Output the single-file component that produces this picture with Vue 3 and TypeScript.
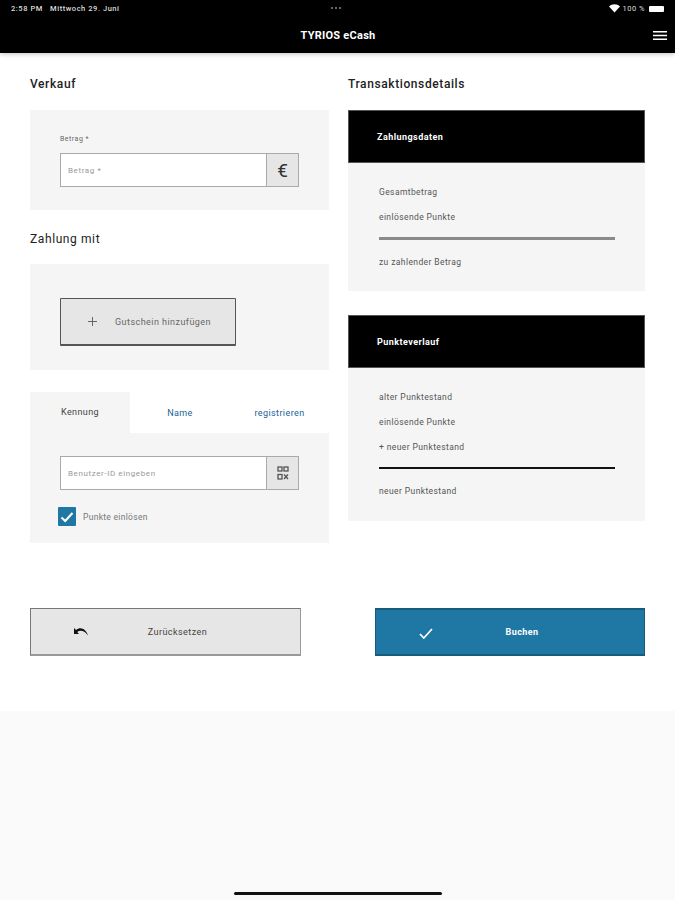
<script setup lang="ts">
interface Panel { title: string; rows: { text: string; rule?: 'grey' | 'black' }[] }
const panels: Panel[] = [
  { title: 'Zahlungsdaten', rows: [{ text: 'Gesamtbetrag' }, { text: 'einlösende Punkte', rule: 'grey' }, { text: 'zu zahlender Betrag' }] },
  { title: 'Punkteverlauf', rows: [{ text: 'alter Punktestand' }, { text: 'einlösende Punkte' }, { text: '+ neuer Punktestand', rule: 'black' }, { text: 'neuer Punktestand' }] }
]
</script>

<template>
  <div class="page">
    <header class="head">
      <div class="status">
        <span class="status-left">2:58 PM&nbsp;&nbsp;&nbsp;Mittwoch 29. Juni</span>
        <span class="dots"><i></i><i></i><i></i></span>
        <span class="status-right">
          <svg width="11" height="9" viewBox="0 0 11 9"><path d="M5.5 8.6 0 2.6C3-.4 8-.4 11 2.6Z" fill="#fff"/></svg>
          <span>100 %</span>
          <span class="battery"></span>
        </span>
      </div>
      <div class="appbar">
        <span class="brand">TYRIOS eCash</span>
        <svg class="burger" width="14" height="9" viewBox="0 0 14 9"><path d="M0 .75h14M0 4.5h14M0 8.25h14" stroke="#fff" stroke-width="1.4"/></svg>
      </div>
    </header>

    <main class="main">
      <div class="columns">
        <section class="col-left">
          <h2 class="title">Verkauf</h2>
          <div class="card sale">
            <label class="small-label">Betrag *</label>
            <div class="field">
              <span class="placeholder">Betrag *</span>
              <span class="addon euro">€</span>
            </div>
          </div>

          <h2 class="title pay-title">Zahlung mit</h2>
          <div class="card voucher">
            <button class="btn add">
              <svg width="9" height="9" viewBox="0 0 9 9"><path d="M4.5 0v9M0 4.500h9" stroke="#666" stroke-width="1"/></svg>
              <span>Gutschein hinzufügen</span>
            </button>
          </div>

          <div class="tabs">
            <span class="tab active">Kennung</span>
            <span class="tab name">Name</span>
            <span class="tab reg">registrieren</span>
          </div>
          <div class="card tabbody">
            <div class="field">
              <span class="placeholder">Benutzer-ID eingeben</span>
              <span class="addon">
                <svg width="12" height="14" viewBox="0 0 12 14" fill="none" stroke="#555" stroke-width="1.3">
                  <rect x="1" y="1" width="4" height="4"/><rect x="7" y="1" width="4" height="4"/><rect x="1" y="8.500" width="4" height="4.500"/>
                  <path d="M7 8.500l4 4.500M11 8.500l-4 4.500"/>
                </svg>
              </span>
            </div>
            <div class="check-row">
              <span class="check">
                <svg width="14" height="12" viewBox="0 0 14 12"><path d="M1.5 6.5 5.2 10 12.5 2" fill="none" stroke="#fff" stroke-width="2"/></svg>
              </span>
              <span class="check-label">Punkte einlösen</span>
            </div>
          </div>
        </section>

        <section class="col-right">
          <h2 class="title">Transaktionsdetails</h2>
          <article v-for="p in panels" :key="p.title" class="panel">
            <div class="panel-head">{{ p.title }}</div>
            <div class="panel-body">
              <template v-for="r in p.rows" :key="r.text">
                <div class="row">{{ r.text }}</div>
                <div v-if="r.rule" class="rule" :class="r.rule"></div>
              </template>
            </div>
          </article>
        </section>
      </div>

      <div class="actions">
        <button class="btn action reset">
          <svg class="act-icon" width="15" height="9" viewBox="0 0 15 9"><path d="M0 1v6h5L3.2 5C6 2.8 10 3 14 8.5 12 2 6.500-.8 2 3Z" fill="#111"/></svg>
          <span>Zurücksetzen</span>
        </button>
        <button class="btn action book">
          <svg class="act-icon" width="14" height="11" viewBox="0 0 14 11"><path d="M1 6 4.800 10 13 1" fill="none" stroke="#fff" stroke-width="1.700"/></svg>
          <span>Buchen</span>
        </button>
      </div>
    </main>

    <footer class="foot"><span class="home"></span></footer>
  </div>
</template>

<style>
html, body { margin: 0; background: #fff; }
</style>

<style scoped>
.page { width: 675px; height: 900px; display: flex; flex-direction: column; font-family: Roboto, "Liberation Sans", sans-serif; color: #444; overflow: hidden; }
.head { height: 53px; background: #000; color: #fff; box-shadow: 0 1px 5px rgba(0,0,0,.25); position: relative; flex: none; box-sizing: border-box; }
.status { height: 17px; display: flex; align-items: center; justify-content: space-between; padding: 0 9px 0 11px; font-size: 7.500px; color: #ddd; position: relative; }
.status-left { font-weight: 500; letter-spacing: .55px; }
.dots { position: absolute; left: 331px; top: 7px; display: flex; gap: 2px; }
.dots i { width: 2px; height: 2px; border-radius: 50%; background: #888; }
.status-right { display: flex; align-items: center; gap: 3px; letter-spacing: .5px; }
.battery { width: 15px; height: 6px; background: #fff; border-radius: 1px; margin-left: 1px; margin-right: 2px; }
.appbar { height: 36px; display: flex; align-items: center; justify-content: center; position: relative; }
.brand { font-size: 11px; font-weight: 700; letter-spacing: .25px; position: relative; left: .5px; }
.burger { position: absolute; right: 8px; top: 14px; }

.main { flex: 1; padding: 0 30px; }
.columns { display: grid; grid-template-columns: 299px 297px; column-gap: 19px; height: 555px; align-items: start; }
.title { margin: 0; height: 57px; padding-top: 23px; box-sizing: border-box; font-size: 12px; line-height: 16px; font-weight: 500; color: #222; letter-spacing: .6px; }
.card { background: #f5f5f5; }
.sale { height: 100px; padding: 24px 30px 0; box-sizing: border-box; }
.small-label { display: block; font-size: 7px; line-height: 10px; color: #666; margin-bottom: 9px; letter-spacing: .5px; }
.field { width: 239px; height: 34px; box-sizing: border-box; border: 1px solid #aaa; background: #fff; display: flex; align-items: center; justify-content: space-between; }
.placeholder { font-size: 8px; color: #999; padding-left: 7px; letter-spacing: .6px; }
.addon { width: 32px; height: 32px; background: #e6e6e6; border-left: 1px solid #aaa; display: flex; align-items: center; justify-content: center; box-sizing: border-box; }
.euro { font-size: 19px; color: #333; font-weight: 400; }
.pay-title { height: 54px; padding-top: 21px; font-weight: 400; }
.voucher { height: 106px; padding: 34px 30px 0; box-sizing: border-box; margin-bottom: 22px; }
.btn { font-family: inherit; cursor: pointer; box-sizing: border-box; padding: 0; }
.add { width: 176px; height: 48px; background: #e6e6e6; border: 1px solid #555; border-bottom-width: 2px; border-radius: 1px; display: flex; align-items: center; padding-left: 27px; gap: 18px; font-size: 9px; color: #666; letter-spacing: .45px; }
.tabs { display: flex; height: 41px; align-items: center; font-size: 9px; color: #1a5f96; }
.tab { text-align: center; letter-spacing: .4px; }
.tab.active { width: 100px; height: 41px; line-height: 41px; background: #f5f5f5; color: #444; }
.tab.name { width: 100px; }
.tab.reg { width: 99px; }
.tabbody { height: 110px; padding: 23px 30px 0; box-sizing: border-box; }
.check-row { display: flex; align-items: center; margin: 17px 0 0 -2px; }
.check { width: 18px; height: 19px; background: #1f78a4; border-radius: 1px; display: flex; align-items: center; justify-content: center; margin-right: 7px; }
.check-label { font-size: 8.500px; color: #777; letter-spacing: .3px; }

.panel { margin-bottom: 24px; }
.panel-head { height: 53px; box-sizing: border-box; background: #000; border: 1px solid #555; color: #fff; font-size: 9px; font-weight: 700; line-height: 53px; padding-left: 28px; letter-spacing: .45px; }
.panel-body { background: #f5f5f5; padding: 24px 30px 21px 31px; }
.panel:last-child .panel-body { padding-bottom: 22px; }
.row { font-size: 8.500px; line-height: 10px; color: #555; margin-bottom: 15.300px; letter-spacing: .4px; }
.row:last-child { margin-bottom: 3px; }
.rule { height: 3px; margin: -1px 0 17px; }
.rule.grey { background: #8a8a8a; }
.rule.black { height: 2px; background: #111; margin: 0 0 17px; }

.actions { display: flex; justify-content: space-between; }
.action { width: 271px; height: 48px; display: flex; align-items: center; position: relative; font-size: 9px; justify-content: center; padding-left: 24px; }
.act-icon { position: absolute; left: 43px; top: 18px; }
.reset { background: #e6e6e6; border: 1px solid #777; border-bottom: 2px solid #999; border-right-color: #999; color: #444; letter-spacing: .45px; }
.book { width: 270px; background: #1f78a4; border: 1px solid #165a7c; border-top-width: 2px; border-bottom-width: 2px; color: #fff; font-weight: 700; letter-spacing: .4px; }
.foot { height: 189px; background: #fafafa; flex: none; position: relative; }
.home { position: absolute; left: 234px; bottom: 5px; width: 208px; height: 3px; background: #111; border-radius: 2px; }
</style>
